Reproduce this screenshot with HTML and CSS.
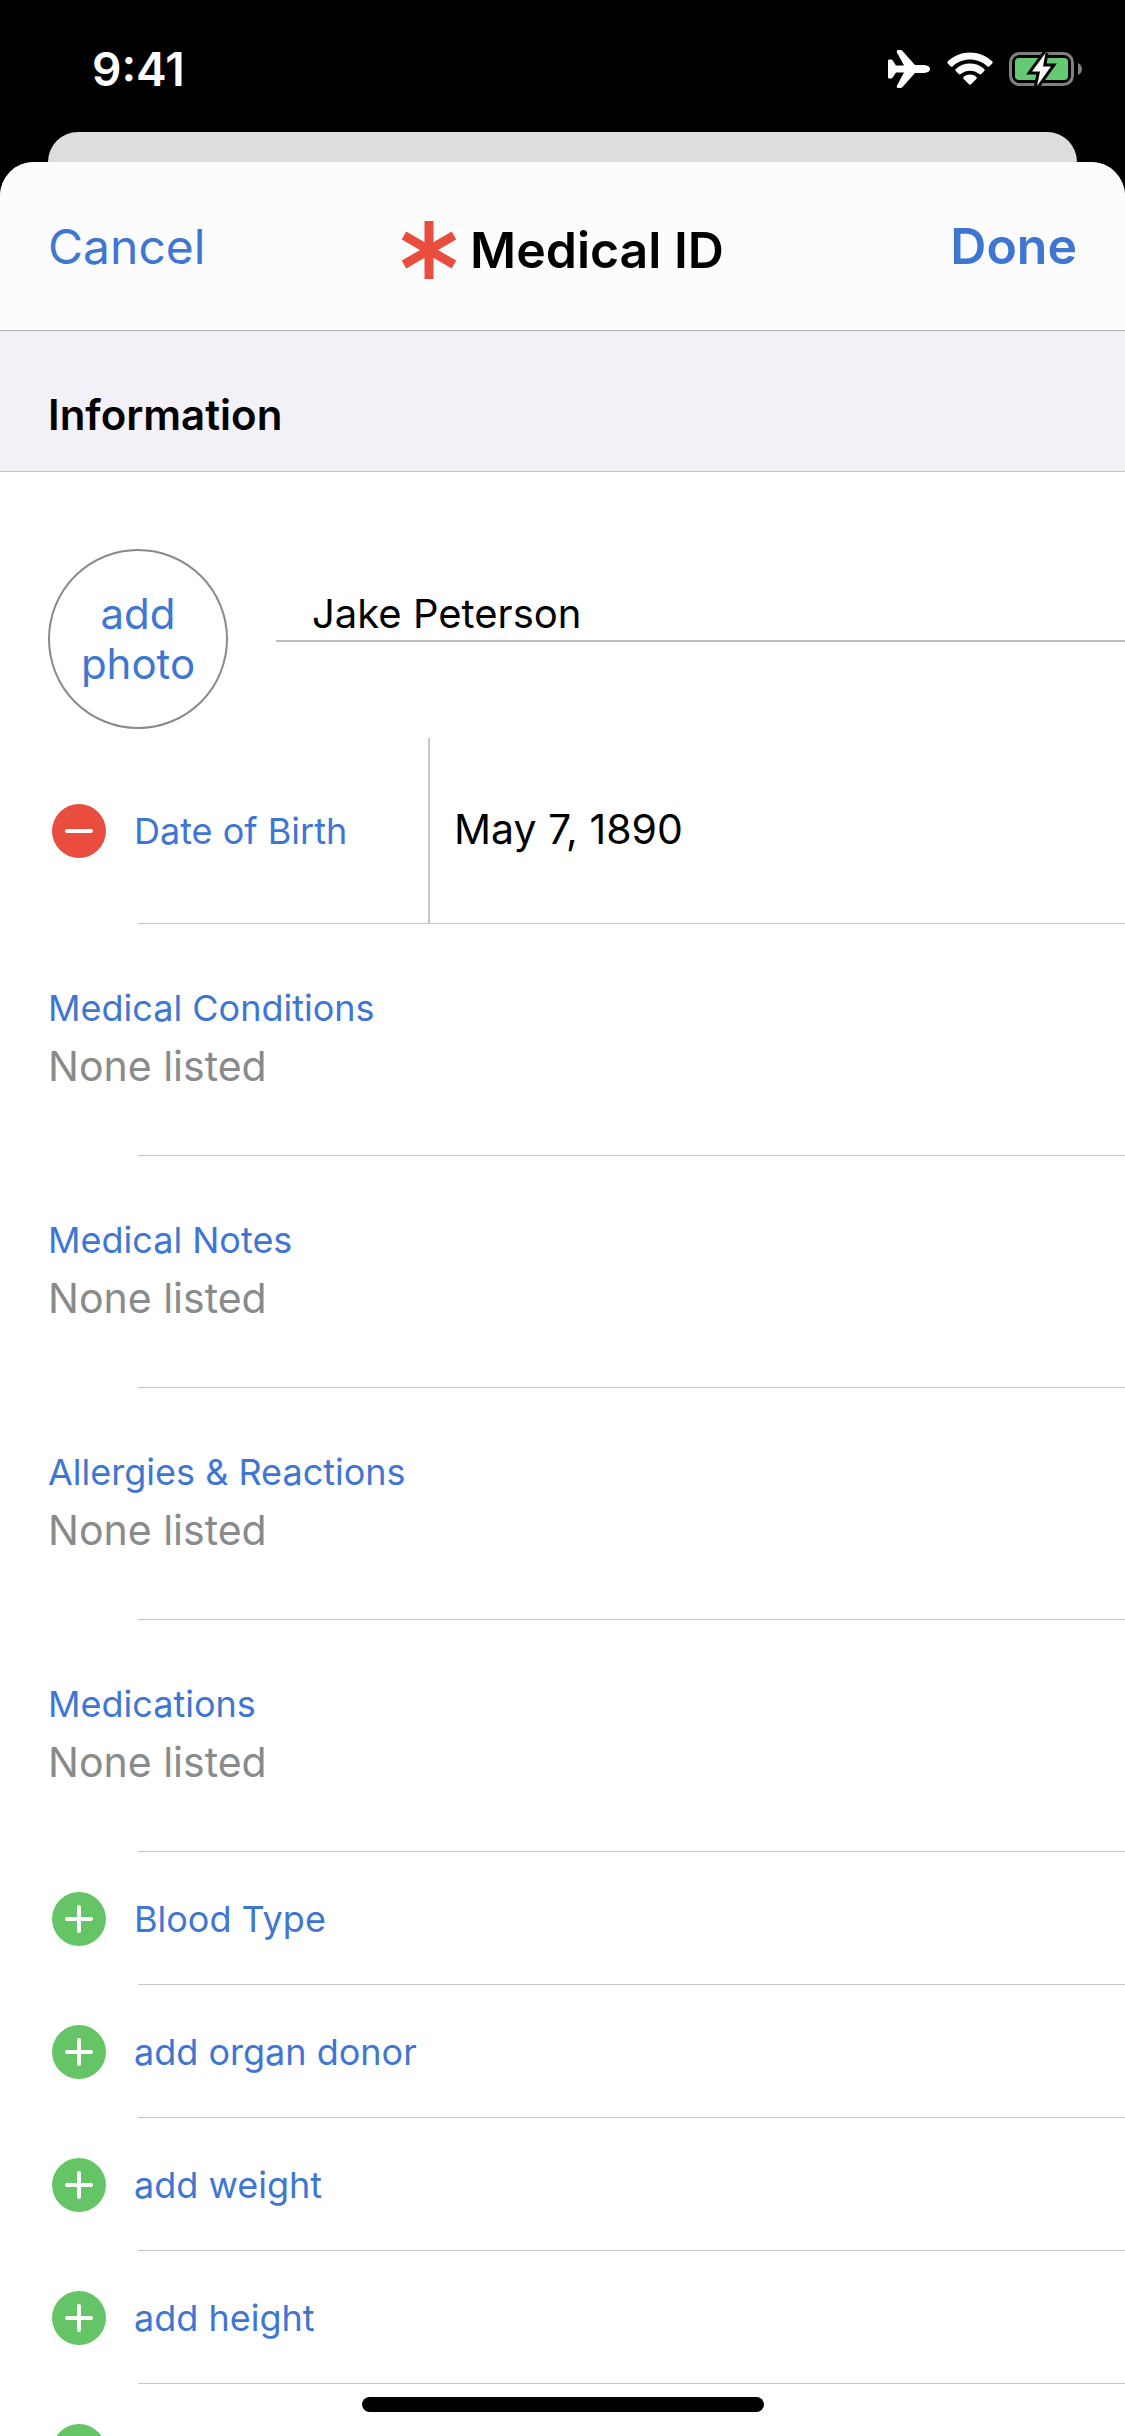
FILE: index.html
```html
<!DOCTYPE html>
<html lang="en">
  <head>
    <meta charset="UTF-8" />
    <meta name="viewport" content="width=device-width, initial-scale=1.0" />
    <title>Medical ID</title>
    <link rel="stylesheet" href="styles.css">
  </head>
  <body>
    <div class="screen">
      <div class="status-bar">
        <span class="time">9:41</span>
        <div class="status-icons">
          <svg width="44" height="40" viewBox="0 0 44 40">
            <path
              d="M1 11.500Q1 10.500 2 10.500H4Q5 10.500 5.600 11.300L9 16.500H17L10 3.500Q9 1 11.500 1H13.500Q14.500 1 15.500 2L28 16H37Q43 16.500 43 20T37 24H28L15.500 38Q14.500 39 13.500 39H11.500Q9 39 10 36.500L17 23.500H9L5.600 28.700Q5 29.500 4 29.500H2Q1 29.500 1 28.500Z"
              fill="#fff"
            />
          </svg>
          <svg width="46" height="34" viewBox="0 0 46 34">
            <path
              d="M0.800 11.500Q-0.200 10.400 0.900 9.300C13-2.300 33-2.300 45.100 9.300Q46.200 10.400 45.200 11.500L42.300 14.400Q41.500 15.200 40.500 14.400C30.500 5.300 15.500 5.300 5.500 14.400Q4.500 15.200 3.700 14.400Z"
              fill="#fff"
            />
            <path
              d="M8.700 18.900Q7.800 18 8.800 17C16.800 9.800 29.200 9.800 37.200 17Q38.200 18 37.300 18.900L34.200 22Q33.300 22.800 32.300 22C27 17.500 19 17.500 13.700 22Q12.700 22.800 11.800 22Z"
              fill="#fff"
            />
            <path
              d="M16.500 26.700Q15.600 25.800 16.600 24.900C20.300 21.700 25.700 21.700 29.400 24.900Q30.400 25.800 29.500 26.700L23.800 32.500Q23 33.200 22.200 32.500Z"
              fill="#fff"
            />
          </svg>
          <svg width="74" height="38" viewBox="0 0 74 38">
            <rect x="1.500" y="3.500" width="62" height="31" rx="9" fill="none" stroke="#808080" stroke-width="3" />
            <rect x="6" y="8" width="53" height="22" rx="4" fill="#65c872" />
            <path d="M69 13Q73 15 73 19T69 25Z" fill="#808080" />
            <path
              d="M36.500 3L23 21.500H31L28 36L42 16.500H34Z"
              fill="#fff"
              stroke="#000"
              stroke-width="6"
              paint-order="stroke"
            />
          </svg>
        </div>
      </div>

      <div class="back-sheet"></div>

      <div class="sheet">
        <header class="nav">
          <button class="nav-btn" type="button">Cancel</button>
          <h1 class="title">
            <svg width="56" height="58" viewBox="0 0 56 58">
              <path
                d="M28 0V58M3 14.500L53 43.500M53 14.500L3 43.500"
                fill="none"
                stroke="#e84d3d"
                stroke-width="9"
              />
            </svg>
            Medical ID
          </h1>
          <button class="nav-btn done" type="button">Done</button>
        </header>

        <h2 class="section-title">Information</h2>

        <form>
          <div class="profile">
            <button class="photo" type="button">add<br />photo</button>
            <input
              class="name"
              type="text"
              aria-label="Name"
              value="Jake Peterson"
            />
          </div>

          <div class="birth">
            <button class="round remove" type="button" aria-label="Remove date of birth">
              <svg width="54" height="54" viewBox="0 0 54 54">
                <path d="M15 27H39" />
              </svg>
            </button>
            <label class="label" for="birthDate">Date of Birth</label>
            <input id="birthDate" class="date" type="text" value="May 7, 1890" />
          </div>

          <div class="entry">
            <label class="label" for="conditions">Medical Conditions</label>
            <input id="conditions" type="text" placeholder="None listed" />
          </div>
          <div class="entry">
            <label class="label" for="notes">Medical Notes</label>
            <input id="notes" type="text" placeholder="None listed" />
          </div>
          <div class="entry">
            <label class="label" for="allergies">Allergies &amp; Reactions</label>
            <input id="allergies" type="text" placeholder="None listed" />
          </div>
          <div class="entry">
            <label class="label" for="medications">Medications</label>
            <input id="medications" type="text" placeholder="None listed" />
          </div>

          <button class="add-row" type="button">
            <span class="round">
              <svg width="54" height="54" viewBox="0 0 54 54">
                <path d="M15 27H39M27 15V39" />
              </svg>
            </span>
            <span class="label">Blood Type</span>
          </button>
          <button class="add-row" type="button">
            <span class="round">
              <svg width="54" height="54" viewBox="0 0 54 54">
                <path d="M15 27H39M27 15V39" />
              </svg>
            </span>
            <span class="label">add organ donor</span>
          </button>
          <button class="add-row" type="button">
            <span class="round">
              <svg width="54" height="54" viewBox="0 0 54 54">
                <path d="M15 27H39M27 15V39" />
              </svg>
            </span>
            <span class="label">add weight</span>
          </button>
          <button class="add-row" type="button">
            <span class="round">
              <svg width="54" height="54" viewBox="0 0 54 54">
                <path d="M15 27H39M27 15V39" />
              </svg>
            </span>
            <span class="label">add height</span>
          </button>
          <button class="add-row" type="button" aria-label="add">
            <span class="round">
              <svg width="54" height="54" viewBox="0 0 54 54">
                <path d="M15 27H39M27 15V39" />
              </svg>
            </span>
          </button>
        </form>
      </div>

      <div class="home-bar"></div>
    </div>
  </body>
</html>
```

FILE: styles.css
```css
* {
  box-sizing: border-box;
  font-family: Inter, "Liberation Sans", sans-serif;
}

body {
  margin: 0;
  background-color: #000;
}

.screen {
  position: relative;
  display: flex;
  flex-direction: column;
  height: 100vh;
  overflow: hidden;
}

button,
input {
  padding: 0;
  border: none;
  background: none;
}

button {
  color: #3f76d2;
  cursor: pointer;
}

input {
  min-width: 0;
  height: 50px;
  color: #000;
  font-size: 41px;
  outline: none;
}

input::placeholder {
  color: #8a8a8a;
  opacity: 1;
}

svg {
  display: block;
}

.status-bar {
  display: flex;
  justify-content: space-between;
  align-items: center;
  height: 132px;
  padding: 6px 42px 0 92px;
}

.time {
  color: #fff;
  font-size: 46px;
  font-weight: 600;
}

.status-icons {
  display: flex;
  align-items: center;
  gap: 16px;
}

/* top edge of the page behind the sheet */
.back-sheet {
  height: 30px;
  margin: 0 48px;
  border-radius: 30px 30px 0 0;
  background-color: #dddddf;
}

.sheet {
  flex: 1;
  border-radius: 34px 34px 0 0;
  background-color: #fff;
  overflow: hidden;
}

.nav {
  display: grid;
  grid-template-columns: 1fr auto 1fr;
  align-items: center;
  height: 169px;
  padding: 0 48px;
  border-bottom: 1px solid #b0b0b4;
  background-color: #fcfcfd;
}

.nav-btn {
  justify-self: start;
  font-size: 48px;
}

.done {
  justify-self: end;
  font-size: 50px;
  font-weight: 600;
}

.title {
  display: flex;
  align-items: center;
  gap: 13px;
  margin: 0;
  padding-top: 8px;
  font-size: 50px;
  font-weight: 600;
}

.section-title {
  margin: 0;
  padding: 59px 48px 31px;
  border-bottom: 1px solid #c6c6c8;
  background-color: #f2f1f7;
  font-size: 42px;
  line-height: 50px;
  font-weight: 600;
}

.profile {
  display: flex;
  align-items: flex-start;
  gap: 48px;
  padding: 77px 0 9px 48px;
}

.photo {
  width: 180px;
  height: 180px;
  border: 2px solid #8a8a8a;
  border-radius: 50%;
  font-size: 42px;
  line-height: 50px;
}

.name {
  flex: 1;
  height: 93px;
  padding: 38px 36px 0;
  border-bottom: 2px solid #bdbdbf;
  font-size: 40px;
}

.label {
  color: #3f76d2;
  font-size: 36px;
  line-height: 50px;
}

.birth {
  display: flex;
  align-items: center;
  height: 186px;
  padding-left: 52px;
  background: linear-gradient(#c6c6c8, #c6c6c8) no-repeat 138px 100% / 100% 1px;
}

.birth .label {
  width: 294px;
  margin-left: 28px;
}

.date {
  flex: 1;
  align-self: stretch;
  height: auto;
  padding: 0 0 4px 24px;
  border-left: 2px solid #c6c6c8;
}

.round {
  display: block;
  width: 54px;
  height: 54px;
  border-radius: 50%;
  background-color: #64c466;
}

.round path {
  fill: none;
  stroke: #fff;
  stroke-width: 4;
  stroke-linecap: round;
}

.remove {
  background-color: #e84d3d;
}

.entry {
  display: flex;
  flex-direction: column;
  gap: 8px;
  height: 232px;
  padding: 59px 48px 0;
  background: linear-gradient(#c6c6c8, #c6c6c8) no-repeat 138px 100% / 100% 1px;
}

.add-row {
  display: flex;
  align-items: center;
  gap: 28px;
  width: 100%;
  height: 133px;
  padding-left: 52px;
  background: linear-gradient(#c6c6c8, #c6c6c8) no-repeat 138px 100% / 100% 1px;
}

.home-bar {
  position: absolute;
  bottom: 24px;
  left: 50%;
  width: 402px;
  height: 15px;
  margin-left: -201px;
  border-radius: 8px;
  background-color: #000;
}
```
